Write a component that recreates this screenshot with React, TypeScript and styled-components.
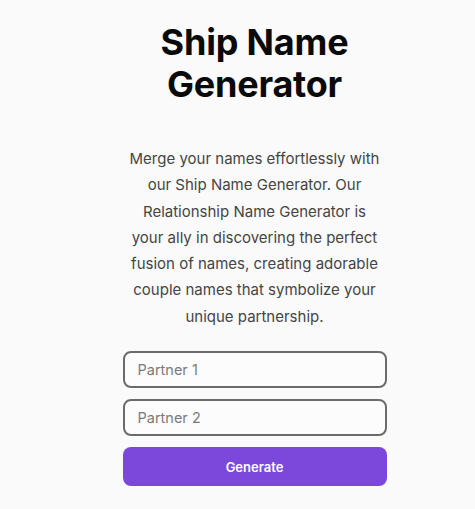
import React from 'react'
import styled, { createGlobalStyle } from 'styled-components'

const GlobalStyle = createGlobalStyle`
	html, body {
		margin: 0;
		padding: 0;
		background: #fafafa;
	}
	body {
		font-family: 'Inter', 'Noto Sans', sans-serif;
	}
`

const Page = styled.main`
	min-height: 509px;
	box-sizing: border-box;
	display: flex;
	flex-direction: column;
	align-items: center;
	padding: 21px 0 0 34px;
`

const Title = styled.h1`
	margin: 0;
	font-size: 36px;
	line-height: 42px;
	font-weight: 700;
	letter-spacing: -0.2px;
	color: #0a0a0a;
	text-align: center;
`

const Intro = styled.p`
	margin: 41px 0 0;
	width: 280px;
	font-size: 15px;
	line-height: 26.3px;
	color: #454545;
	text-align: center;
	white-space: nowrap;
`

const Form = styled.form`
	margin-top: 21px;
	width: 264px;
	display: flex;
	flex-direction: column;
	gap: 11px;
`

const Field = styled.input`
	box-sizing: border-box;
	height: 37px;
	width: 100%;
	padding: 0 13px;
	border: 2px solid #6b6b6b;
	border-radius: 8px;
	background: #fcfcfc;
	font-family: inherit;
	font-size: 14.5px;
	color: #222;
	&::placeholder {
		color: #7a7a7a;
	}
`

const Button = styled.button`
	height: 39px;
	border: none;
	border-radius: 8px;
	background: #7c48dc;
	color: #fff;
	font-family: inherit;
	font-size: 13px;
	font-weight: 600;
	cursor: pointer;
`

const introLines = [
	'Merge your names effortlessly with',
	'our Ship Name Generator. Our',
	'Relationship Name Generator is',
	'your ally in discovering the perfect',
	'fusion of names, creating adorable',
	'couple names that symbolize your',
	'unique partnership.',
]

export default function App() {
	return (
		<>
			<GlobalStyle />
			<Page>
				<Title>
					Ship Name
					<br />
					Generator
				</Title>
				<Intro>
					{introLines.map((line, i) => (
						<React.Fragment key={i}>
							{line}
							{i < introLines.length - 1 && <br />}
						</React.Fragment>
					))}
				</Intro>
				<Form onSubmit={(e) => e.preventDefault()}>
					<Field placeholder="Partner 1" />
					<Field placeholder="Partner 2" />
					<Button type="submit">Generate</Button>
				</Form>
			</Page>
		</>
	)
}
